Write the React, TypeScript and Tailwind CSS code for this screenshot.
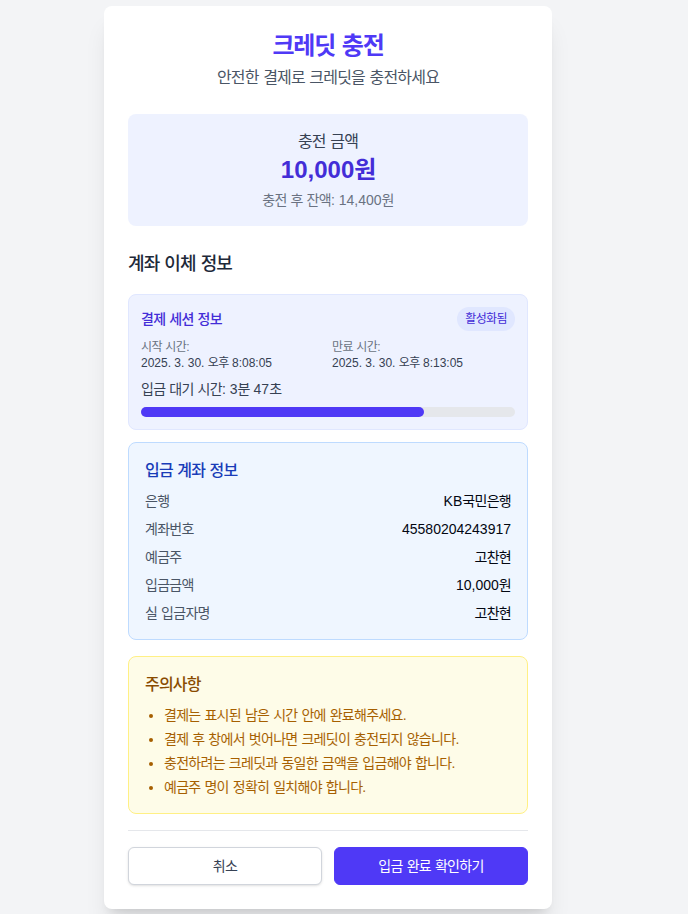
import React from "react";

function K({ t }: { t: string }) {
  const parts = t.split(/([\uAC00-\uD7A3]+)/);
  return (
    <>
      {parts.map((p, i) =>
        /[\uAC00-\uD7A3]/.test(p) ? (
          <span key={i} className="tracking-[-0.05em]">
            {p}
          </span>
        ) : (
          <React.Fragment key={i}>{p}</React.Fragment>
        )
      )}
    </>
  );
}

export default function App() {
  const rows: [string, string][] = [
    ["은행", "KB국민은행"],
    ["계좌번호", "45580204243917"],
    ["예금주", "고찬현"],
    ["입금금액", "10,000원"],
    ["실 입금자명", "고찬현"],
  ];
  const notes = [
    "결제는 표시된 남은 시간 안에 완료해주세요.",
    "결제 후 창에서 벗어나면 크레딧이 충전되지 않습니다.",
    "충전하려는 크레딧과 동일한 금액을 입금해야 합니다.",
    "예금주 명이 정확히 일치해야 합니다.",
  ];
  const progress = (227 / 300) * 100;
  return (
    <div
      className="min-h-[914px] bg-gray-100 pt-[6px] pb-4"
      style={{ fontFamily: '"Liberation Sans", "Noto Sans CJK KR", sans-serif' }}
    >
      <div className="ml-[104px] w-[448px] rounded-lg bg-white p-6 shadow-xl">
        <div className="text-center">
          <h1 className="text-2xl font-bold text-indigo-600">
            <K t="크레딧 충전" />
          </h1>
          <p className="mt-1 text-base text-gray-600">
            <K t="안전한 결제로 크레딧을 충전하세요" />
          </p>
        </div>

        <div className="mt-6 rounded-lg bg-indigo-50 p-4 text-center">
          <div className="text-base text-gray-700">
            <K t="충전 금액" />
          </div>
          <div className="text-2xl font-bold text-indigo-700">
            <K t="10,000원" />
          </div>
          <div className="mt-1 text-sm text-gray-500">
            <K t="충전 후 잔액: 14,400원" />
          </div>
        </div>

        <h2 className="mt-6 mb-4 text-lg font-medium text-gray-800">
          <K t="계좌 이체 정보" />
        </h2>

        <div className="mb-3 rounded-lg border border-indigo-100 bg-indigo-50 p-3">
          <div className="mb-2 flex items-center justify-between">
            <span className="text-sm font-medium text-indigo-700">
              <K t="결제 세션 정보" />
            </span>
            <span className="rounded-full bg-indigo-100 px-2 py-1 text-xs text-indigo-700">
              <K t="활성화됨" />
            </span>
          </div>
          <div className="grid grid-cols-2 gap-2 text-xs">
            <div>
              <div className="text-gray-500">
                <K t="시작 시간:" />
              </div>
              <div className="text-gray-700">
                <K t="2025. 3. 30. 오후 8:08:05" />
              </div>
            </div>
            <div>
              <div className="text-gray-500">
                <K t="만료 시간:" />
              </div>
              <div className="text-gray-700">
                <K t="2025. 3. 30. 오후 8:13:05" />
              </div>
            </div>
          </div>
          <div className="mt-2 text-sm text-gray-700">
            <K t="입금 대기 시간: 3분 47초" />
          </div>
          <div className="mt-2 h-2.5 w-full rounded-full bg-gray-200">
            <div className="h-2.5 rounded-full bg-indigo-600" style={{ width: `${progress}%` }} />
          </div>
        </div>

        <div className="mb-4 rounded-lg border border-blue-200 bg-blue-50 p-4">
          <h3 className="mb-2 text-base font-medium text-blue-800">
            <K t="입금 계좌 정보" />
          </h3>
          <div className="space-y-2">
            {rows.map(([k, v]) => (
              <div key={k} className="flex justify-between text-sm">
                <span className="text-gray-600">
                  <K t={k} />
                </span>
                <span className="text-gray-950">
                  <K t={v} />
                </span>
              </div>
            ))}
          </div>
        </div>

        <div className="rounded-lg border border-yellow-200 bg-yellow-50 p-4">
          <h3 className="mb-2 text-base font-medium text-yellow-800">
            <K t="주의사항" />
          </h3>
          <ul className="list-disc space-y-1 pl-[19px] text-sm text-yellow-700">
            {notes.map((n) => (
              <li key={n}>
                <K t={n} />
              </li>
            ))}
          </ul>
        </div>

        <div className="mt-4 flex gap-3 border-t border-gray-200 pt-4">
          <button className="flex-1 rounded-md border border-gray-300 bg-white py-2 text-sm font-normal text-gray-700 shadow-sm">
            <K t="취소" />
          </button>
          <button className="flex-1 rounded-md border border-indigo-600 bg-indigo-600 py-2 text-sm font-normal text-white">
            <K t="입금 완료 확인하기" />
          </button>
        </div>
      </div>
    </div>
  );
}
